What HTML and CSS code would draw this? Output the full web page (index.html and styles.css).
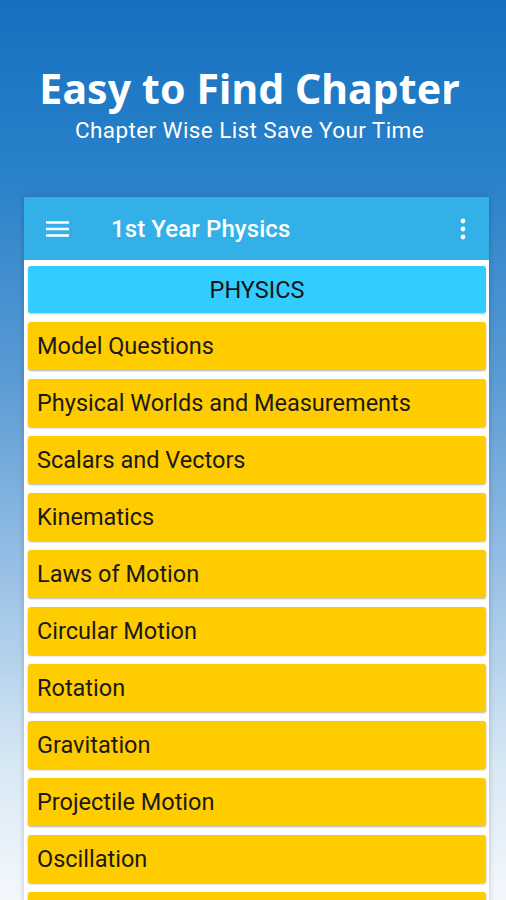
FILE: index.html
```html
<!DOCTYPE html>
<html>
<head>
<meta charset="utf-8">
<link rel="stylesheet" href="styles.css">
</head>
<body>
<div class="page">
  <header class="hero">
    <h1 class="hero-title">Easy to Find Chapter</h1>
    <p class="hero-sub">Chapter Wise List Save Your Time</p>
  </header>
  <div class="phone">
    <div class="toolbar">
      <svg class="menu-icon" width="23" height="16" viewBox="0 0 23 16"><path d="M0 1.5h23M0 8h23M0 14.5h23" stroke="#fff" stroke-width="2.4" fill="none"/></svg>
      <span class="toolbar-title">1st Year Physics</span>
      <svg class="more-icon" width="6" height="22" viewBox="0 0 6 22"><circle cx="3" cy="3" r="2.4" fill="#fff"/><circle cx="3" cy="11" r="2.4" fill="#fff"/><circle cx="3" cy="19" r="2.4" fill="#fff"/></svg>
    </div>
    <div class="content">
      <div class="section-head">PHYSICS</div>
      <div class="item">Model Questions</div>
      <div class="item">Physical Worlds and Measurements</div>
      <div class="item">Scalars and Vectors</div>
      <div class="item">Kinematics</div>
      <div class="item">Laws of Motion</div>
      <div class="item">Circular Motion</div>
      <div class="item">Rotation</div>
      <div class="item">Gravitation</div>
      <div class="item">Projectile Motion</div>
      <div class="item">Oscillation</div>
      <div class="item"></div>
    </div>
  </div>
</div>
</body>
</html>
```
FILE: styles.css
```css
html, body {
  margin: 0;
  padding: 0;
}
body {
  width: 506px;
  height: 900px;
  overflow: hidden;
  background: linear-gradient(to bottom, #1570c0 0%, #2a82c9 20%, #5a9bd4 42%, #9cc3e6 65%, #d8e8f5 85%, #f4f8fc 100%);
  font-family: Roboto, "Noto Sans", sans-serif;
}
.page {
  display: flex;
  flex-direction: column;
}
.hero {
  height: 197px;
  padding-top: 63px;
  padding-right: 7px;
  box-sizing: border-box;
  text-align: center;
  color: #fff;
}
.hero-title {
  margin: 0;
  font-family: "Noto Sans", sans-serif;
  font-weight: 700;
  font-size: 41px;
  line-height: 50px;
  letter-spacing: 0.1px;
}
.hero-sub {
  margin: 4px 0 0;
  font-size: 22.5px;
  line-height: 26px;
  letter-spacing: 0.4px;
}
.phone {
  width: 465px;
  margin-left: 24px;
  box-shadow: 0 0 6px rgba(0,0,0,0.2);
}
.toolbar {
  height: 63px;
  background: #34b0e8;
  display: flex;
  align-items: center;
  padding-left: 22px;
  color: #fff;
}
.menu-icon {
  flex: none;
}
.toolbar-title {
  margin-left: 42px;
  font-size: 24px;
  font-weight: 500;
  flex: 1;
  letter-spacing: 0.1px;
}
.more-icon {
  flex: none;
  margin-right: 23px;
}
.content {
  background: #fff;
  padding: 6px 3px 0 4px;
  height: 700px;
}
.section-head {
  height: 47px;
  background: #33ccff;
  border-radius: 3px;
  display: flex;
  align-items: center;
  justify-content: center;
  font-size: 23.5px;
  color: #151515;
  margin-bottom: 9px;
  box-shadow: 0 1px 2px rgba(0,0,0,0.25);
}
.item {
  height: 48px;
  background: #ffcc00;
  border-radius: 3px;
  display: flex;
  align-items: center;
  padding-left: 9px;
  font-size: 23.5px;
  color: #1a1a1a;
  margin-bottom: 9px;
  box-shadow: 0 1px 2px rgba(0,0,0,0.3);
}
```
